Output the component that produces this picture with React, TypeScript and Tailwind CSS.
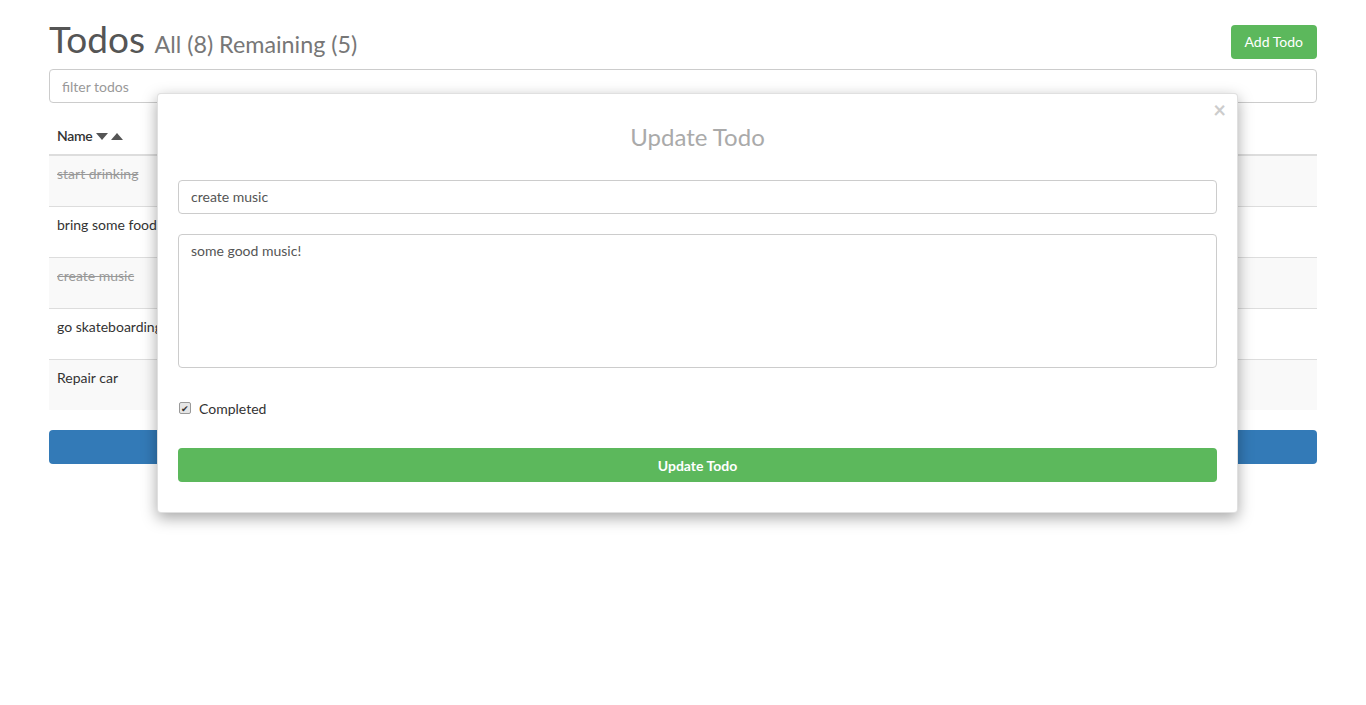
import React, { useState } from 'react';

const todos = [
  { name: 'start drinking', done: true },
  { name: 'bring some food', done: false },
  { name: 'create music', done: true },
  { name: 'go skateboarding', done: false },
  { name: 'Repair car', done: false },
];

function CaretDown() {
  return (
    <svg width="12" height="8" viewBox="0 0 12 8" className="inline-block">
      <path d="M0 0 L12 0 L6 7 Z" fill="#555" />
    </svg>
  );
}

function CaretUp() {
  return (
    <svg width="12" height="8" viewBox="0 0 12 8" className="inline-block">
      <path d="M0 7 L12 7 L6 0 Z" fill="#555" />
    </svg>
  );
}

export default function App() {
  const [title, setTitle] = useState('create music');
  const [body, setBody] = useState('some good music!');
  const [completed, setCompleted] = useState(true);

  return (
    <div className="relative min-h-[705px] bg-white text-[14px] text-[#333]" style={{ fontFamily: 'Lato, "Open Sans", sans-serif' }}>
      <div className="px-[49px]">
        <div className="flex h-[52px] items-start justify-between pt-[17px]">
          <h1 className="text-[37px] leading-[44px] text-[#555]">
            Todos <span className="text-[23.3px] leading-[44px] text-[#777]">All (8) Remaining (5)</span>
          </h1>
          <button className="mt-[8px] h-[34px] rounded bg-[#5cb85c] px-[14px] pb-[1px] text-[14px] text-white">Add Todo</button>
        </div>

        <input
          className="mt-[17px] h-[34px] w-full rounded border border-[#ccc] px-3 text-[14px] placeholder-[#999] outline-none"
          placeholder="filter todos"
        />

        <table className="mt-[15px] w-full border-collapse">
          <thead>
            <tr className="border-b-2 border-[#ddd]">
              <th className="px-2 py-2 text-left text-[14px] leading-5 font-semibold text-[#333]">
                <span className="tracking-[-0.3px]">Name</span>{' '}
                <CaretDown /> <CaretUp />
              </th>
            </tr>
          </thead>
          <tbody>
            {todos.map((t, i) => (
              <tr key={t.name} className={`h-[51px] border-t border-[#ddd] align-top ${i % 2 === 0 ? 'bg-[#f9f9f9]' : ''}`}>
                <td className={`px-2 py-2 leading-5 ${t.done ? 'text-[#999] line-through' : ''}`}>{t.name}</td>
              </tr>
            ))}
          </tbody>
        </table>

        <button className="mt-5 h-[34px] w-full rounded bg-[#337ab7]" />
      </div>

      <div className="absolute left-[157px] top-[93px] w-[1081px] rounded border border-[#ccc]/60 bg-white px-[20px] pb-[30px] pt-[28px] shadow-[0_5px_15px_rgba(0,0,0,0.35)]">
        <button className="absolute right-[11px] top-[5px] text-[22px] font-bold leading-none text-[#ccc]">×</button>
        <h3 className="text-center text-[24px] leading-[30px] text-[#aaa]">Update Todo</h3>
        <input
          value={title}
          onChange={(e) => setTitle(e.target.value)}
          className="mt-[28px] h-[34px] w-full rounded border border-[#ccc] px-3 pb-[1px] text-[14px] text-[#555] outline-none"
        />
        <textarea
          value={body}
          onChange={(e) => setBody(e.target.value)}
          className="mt-5 block h-[134px] w-full resize-none rounded border border-[#ccc] px-3 py-[5px] text-[14px] text-[#555] outline-none"
        />
        <label className="mt-[30px] flex h-5 items-center gap-[8px] text-[14px] text-[#333]">
          <span
            onClick={() => setCompleted(!completed)}
            className="ml-[1px] flex h-[12px] w-[12px] items-center justify-center rounded-[2px] border border-[#999] bg-[#e6e6e6] text-[9px] leading-none text-[#333]"
          >
            {completed ? '✔' : ''}
          </span>
          Completed
        </label>
        <button className="mt-[30px] h-[34px] w-full rounded bg-[#5cb85c] text-[14px] font-bold text-white">Update Todo</button>
      </div>
    </div>
  );
}
